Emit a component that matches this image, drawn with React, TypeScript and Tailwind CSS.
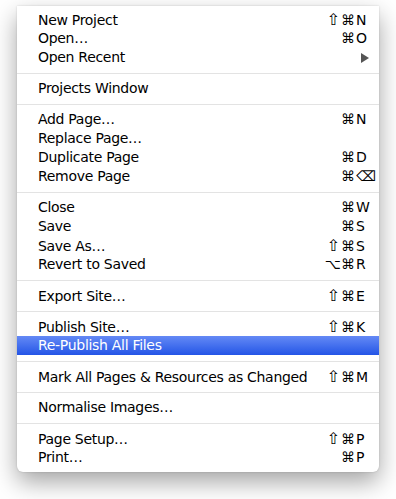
import React from "react";

type Item =
  | { type: "sep" }
  | { type: "item"; label: string; mods?: string; key?: string; sub?: boolean; active?: boolean };

const items: Item[] = [
  { type: "item", label: "New Project", mods: "⇧⌘", key: "N" },
  { type: "item", label: "Open…", mods: "⌘", key: "O" },
  { type: "item", label: "Open Recent", sub: true },
  { type: "sep" },
  { type: "item", label: "Projects Window" },
  { type: "sep" },
  { type: "item", label: "Add Page…", mods: "⌘", key: "N" },
  { type: "item", label: "Replace Page…" },
  { type: "item", label: "Duplicate Page", mods: "⌘", key: "D" },
  { type: "item", label: "Remove Page", mods: "⌘", key: "⌫" },
  { type: "sep" },
  { type: "item", label: "Close", mods: "⌘", key: "W" },
  { type: "item", label: "Save", mods: "⌘", key: "S" },
  { type: "item", label: "Save As…", mods: "⇧⌘", key: "S" },
  { type: "item", label: "Revert to Saved", mods: "⌥⌘", key: "R" },
  { type: "sep" },
  { type: "item", label: "Export Site…", mods: "⇧⌘", key: "E" },
  { type: "sep" },
  { type: "item", label: "Publish Site…", mods: "⇧⌘", key: "K" },
  { type: "item", label: "Re-Publish All Files", active: true },
  { type: "sep" },
  { type: "item", label: "Mark All Pages & Resources as Changed", mods: "⇧⌘", key: "M" },
  { type: "sep" },
  { type: "item", label: "Normalise Images…" },
  { type: "sep" },
  { type: "item", label: "Page Setup…", mods: "⇧⌘", key: "P" },
  { type: "item", label: "Print…", mods: "⌘", key: "P" },
];

function Mods({ mods }: { mods: string }) {
  return (
    <span className="whitespace-nowrap text-right pr-[1px]">
      {Array.from(mods).map((c, i) =>
        c === "⇧" ? (
          <span key={i} className="text-[16px] leading-[19px] mr-[1px]">⇧</span>
        ) : (
          <span key={i}>{c}</span>
        )
      )}
    </span>
  );
}

export default function App() {
  return (
    <div className="min-h-[499px] w-[396px] bg-white pt-[6px] pl-[17px]" style={{ fontFamily: '"DejaVu Sans", "Liberation Sans", sans-serif' }}>
      <div className="w-[362px] bg-white rounded-b-[6px] pt-[4px] pb-[5px] shadow-[0_10px_24px_rgba(0,0,0,0.36),0_0_2px_rgba(0,0,0,0.18)]">
        {items.map((it, i) =>
          it.type === "sep" ? (
            <div key={i} className="h-[12px] flex items-center">
              <div className="h-px w-full bg-[#e3e3e3]" />
            </div>
          ) : (
            <div
              key={i}
              className={
                "h-[19px] grid grid-cols-[1fr_auto_16px] items-center pl-[21px] pr-[7px] text-[14px] leading-[19px] " +
                (it.active
                  ? "bg-gradient-to-b from-[#6489f5] to-[#2454e6] text-white"
                  : "text-black")
              }
            >
              <span className="whitespace-nowrap tracking-[-0.3px]">{it.label}</span>
              {it.mods ? <Mods mods={it.mods} /> : <span />}
              <span className="whitespace-nowrap">
                {it.sub ? (
                  <svg width="8" height="10" viewBox="0 0 8 10" className="ml-[5px]">
                    <path d="M0 0 L8 5 L0 10 Z" fill="#555" />
                  </svg>
                ) : (
                  it.key ?? ""
                )}
              </span>
            </div>
          )
        )}
      </div>
    </div>
  );
}
